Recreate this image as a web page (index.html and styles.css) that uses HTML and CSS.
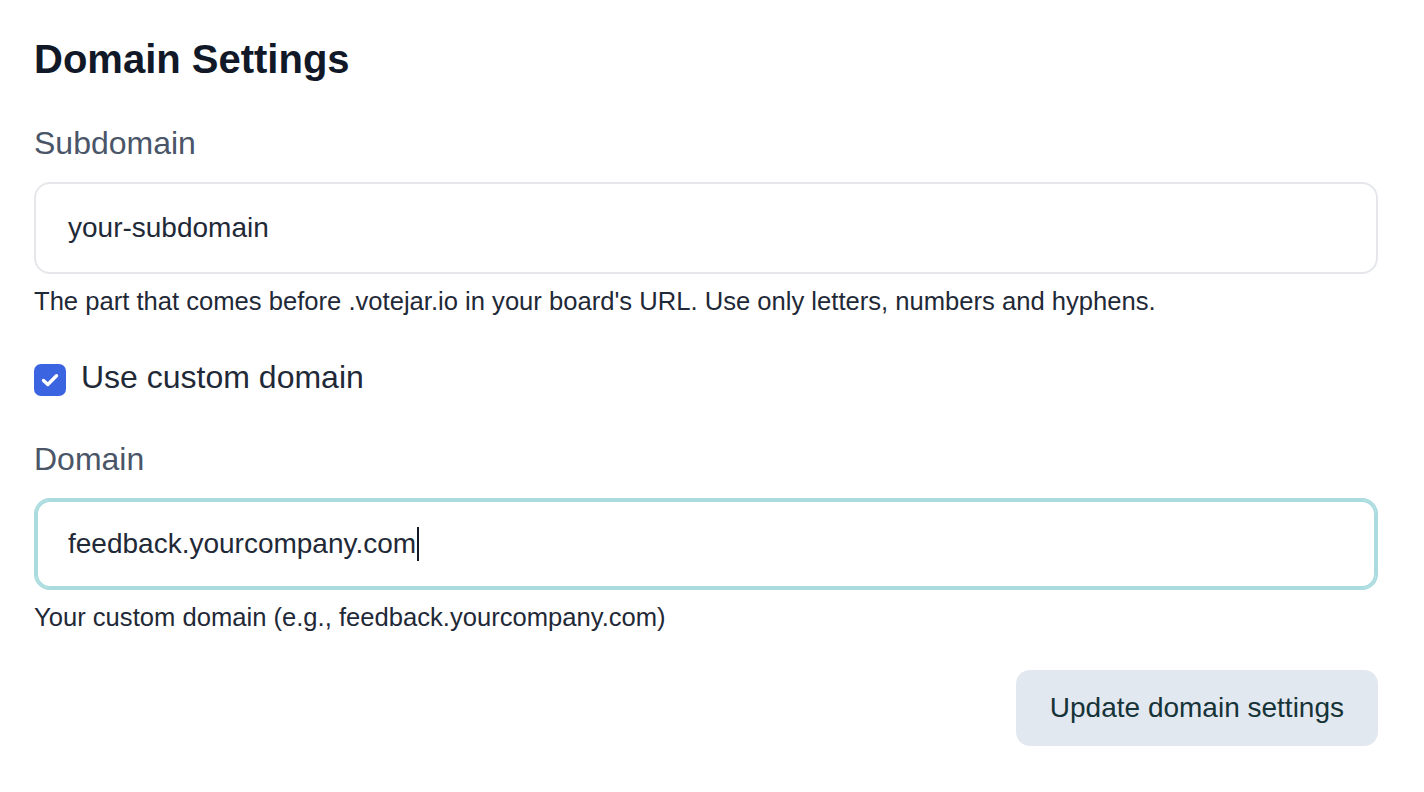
FILE: index.html
```html
<!DOCTYPE html>
<html lang="en">
<head>
  <meta charset="UTF-8" />
  <meta name="viewport" content="width=device-width, initial-scale=1.0"/>
  <title>Domain Settings</title>
  <link rel="stylesheet" href="styles.css">
</head>
<body>
  <div class="page">
    <h1>Domain Settings</h1>

    <label class="label">Subdomain</label>
    <div class="field">your-subdomain</div>
    <div class="help">The part that comes before .votejar.io in your board's URL. Use only letters, numbers and hyphens.</div>

    <div class="check-row">
      <span class="checkbox">
        <svg width="32" height="32" viewBox="0 0 32 32">
          <path d="M9.5 16.5 L13.8 20.5 L22.5 11.8" fill="none" stroke="#fff" stroke-width="3.4" stroke-linecap="round" stroke-linejoin="round"/>
        </svg>
      </span>
      <span class="check-label">Use custom domain</span>
    </div>

    <label class="label label-domain">Domain</label>
    <div class="field focused">feedback.yourcompany.com<span class="caret"></span></div>
    <div class="help">Your custom domain (e.g., feedback.yourcompany.com)</div>

    <div class="actions">
      <button class="btn">Update domain settings</button>
    </div>
  </div>
</body>
</html>
```

FILE: styles.css
```css
body {
  margin: 0;
  background: #fff;
  font-family: "Liberation Sans", Arial, sans-serif;
  color: #1f2937;
}

.page {
  padding: 35px 46px 0 34px;
}

h1 {
  margin: 0;
  font-size: 40px;
  line-height: 48px;
  font-weight: bold;
  color: #111827;
}

.label {
  display: block;
  margin-top: 40px;
  margin-bottom: 19px;
  font-size: 32px;
  line-height: 40px;
  color: #4a5568;
}

.label-domain {
  margin-top: 43px;
}

.field {
  box-sizing: border-box;
  height: 92px;
  display: flex;
  align-items: center;
  padding: 0 32px;
  border: 2px solid #e5e7eb;
  border-radius: 16px;
  font-size: 28px;
  color: #1f2937;
}

.field.focused {
  border-color: #a9dbdf;
  box-shadow: inset 0 0 0 2px #a9dbdf;
}

.caret {
  display: inline-block;
  width: 2px;
  height: 34px;
  margin-left: 1px;
  background: #111827;
}

.help {
  margin-top: 11px;
  font-size: 25.6px;
  line-height: 32px;
  color: #1f2937;
}

.check-row {
  display: flex;
  align-items: center;
  gap: 15px;
  margin-top: 47px;
}

.checkbox {
  width: 32px;
  height: 32px;
  border-radius: 7px;
  background: #3a64e0;
  display: flex;
}

.check-label {
  font-size: 32px;
  line-height: 32px;
  color: #1f2937;
  position: relative;
  top: -3px;
}

.actions {
  display: flex;
  justify-content: flex-end;
  margin-top: 37px;
}

.btn {
  border: none;
  background: #e2e8f0;
  color: #163338;
  font-family: inherit;
  font-size: 28px;
  line-height: 32px;
  padding: 22px 34px;
  border-radius: 14px;
  cursor: pointer;
}
```
